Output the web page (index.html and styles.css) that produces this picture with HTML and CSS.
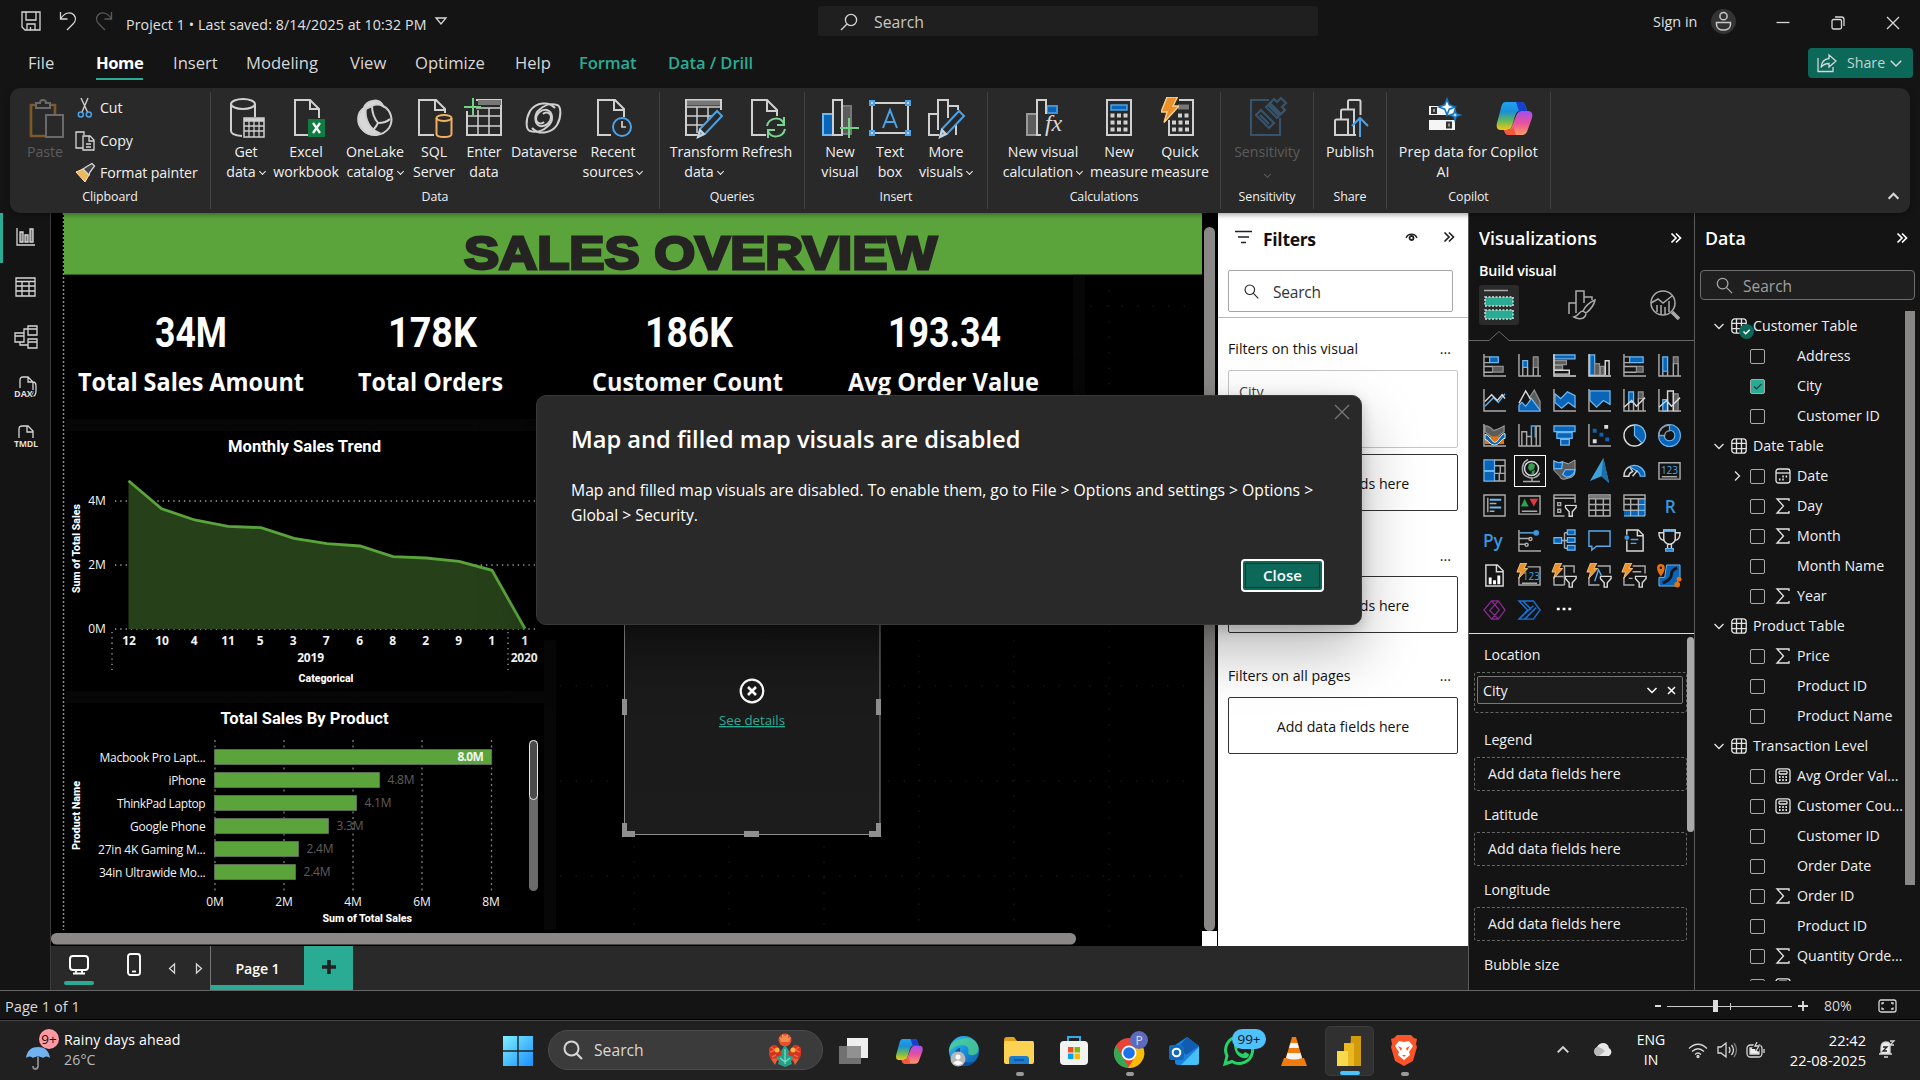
FILE: index.html
```html
<!DOCTYPE html>
<html lang="en">
<head>
<meta charset="utf-8">
<title>Project 1</title>
<link rel="stylesheet" href="styles.css">
</head>
<body>
<svg class="defs" width="0" height="0">
  <defs>
    <linearGradient id="cpA" x1="0" y1="0" x2="0" y2="1"><stop offset="0" stop-color="#1fa2f2"/><stop offset=".35" stop-color="#1b8fd6"/><stop offset=".65" stop-color="#5fb760"/><stop offset="1" stop-color="#f2c80f"/></linearGradient>
    <linearGradient id="cpB" x1="0" y1="0" x2="0" y2="1"><stop offset="0" stop-color="#a24ff0"/><stop offset=".5" stop-color="#e8519b"/><stop offset="1" stop-color="#ff9a62"/></linearGradient>
    <linearGradient id="edg" x1="0" y1="0" x2="1" y2="1"><stop offset="0" stop-color="#35c1f1"/><stop offset=".5" stop-color="#1b8fdc"/><stop offset="1" stop-color="#0c59a4"/></linearGradient>
    <linearGradient id="win" x1="0" y1="0" x2="1" y2="1"><stop offset="0" stop-color="#7df0ff"/><stop offset="1" stop-color="#1a8fff"/></linearGradient>
    <linearGradient id="mapBg" x1="0" y1="0" x2="0" y2="1"><stop offset="0" stop-color="#141414"/><stop offset=".4" stop-color="#1b1b1b"/><stop offset="1" stop-color="#1c1c1c"/></linearGradient>
    <symbol id="search" viewBox="0 0 20 20"><circle cx="8" cy="8" r="5.6"/><path d="M12.2 12.2 18 18"/></symbol>
    <symbol id="dbl" viewBox="0 0 12 12"><path d="M1.5 1.5 6 6l-4.5 4.5M6 1.5 10.5 6 6 10.5"/></symbol>
    <symbol id="down" viewBox="0 0 12 12"><path d="M1.5 4 6 8.5 10.5 4"/></symbol>
    <symbol id="tbl" viewBox="0 0 16 16"><rect x=".8" y=".8" width="14.4" height="14.4" rx="3"/><path d="M5.5 .8v14.4M10.5 .8v14.4M.8 5.3h14.4M.8 10.7h14.4"/></symbol>
    <symbol id="sum" viewBox="0 0 16 16"><path d="M14 3V1H2l6.5 7L2 15h12v-2"/></symbol>
    <symbol id="calc" viewBox="0 0 16 16"><rect x="1" y=".8" width="14" height="14.4" rx="2.5"/><rect x="4" y="3.2" width="8" height="2.8" rx=".8"/><path d="M4 9h1.6M7.2 9h1.6M10.4 9H12M4 12h1.6M7.2 12h1.6M10.4 12H12" stroke-width="1.8"/></symbol>
    <symbol id="cal" viewBox="0 0 16 16"><rect x="1" y="1" width="14" height="14" rx="2.5"/><path d="M1 5h14"/><path d="M7.3 8.5h1.5M10.6 8.5h1.5M4 11.5h1.5M7.3 11.5h1.5" stroke-width="1.8"/></symbol>
    <symbol id="copilot" viewBox="0 0 40 40"><path d="M12 4h15c3 0 4 2 5 5l1 4h-7c-3 0-4 2-5 5l-3 10c-1 3-3 4-6 4H7c-4 0-5-3-4-7l4-15c1-4 2-6 5-6z" fill="url(#cpA)"/><path d="M22 4h5c3 0 4 2 5 5l1 4h-8z" fill="#1a3fd0"/><path d="M28 13h6c4 0 5 3 4 7l-4 11c-1 4-3 6-6 6H15c-3 0-4-2-5-5h4c2 0 3-1 4-4l4-10c1-3 3-5 6-5z" fill="url(#cpB)"/><path d="M10 32h5c2 0 3-1 4-4l3 9h-7c-3 0-4-2-5-5z" fill="#f5583c"/></symbol>
    <symbol id="bolt" viewBox="0 0 12 18"><path d="M4 0h7L8 6h4L2 17l2-7H0z" fill="#e8912d" stroke="#ffd28a" stroke-width=".9"/></symbol>
    <symbol id="funnel" viewBox="0 0 12 12"><path d="M.8 .8h10.4v2L7.5 7v4.2h-3V7L.8 2.8z" fill="#141414" stroke="#d8d8d8" stroke-width="1.4"/></symbol>
  </defs>
</svg>

<header class="titlebar">
  <div class="quick">
    <svg width="20" height="20" viewBox="0 0 20 20" class="ln"><path d="M1 1h18v18H4l-3-3zM5 1v8h10V1M6 19v-6h8v6M9.500 16v3"/></svg>
    <svg width="18" height="20" viewBox="0 0 18 20" class="ln"><path d="M1.500 1v7h7M1.500 8C5 2 11 0 15 4c3 4 1 7-1 9l-6 6"/></svg>
    <svg width="18" height="20" viewBox="0 0 18 20" class="ln dim"><path d="M16.500 1v7h-7M16.500 8C13 2 7 0 3 4c-3 4-1 7 1 9l6 6"/></svg>
  </div>
  <div class="doc">Project 1 • Last saved: 8/14/2025 at 10:32 PM</div>
  <svg class="ln docarrow" width="12" height="8" viewBox="0 0 12 8"><path d="M1 1h10L6 7z"/></svg>
  <div class="topsearch"><svg class="ln flip" width="20" height="20"><use href="#search"/></svg><span>Search</span></div>
  <div class="account"><span>Sign in</span>
    <svg width="25" height="25" viewBox="0 0 25 25"><circle cx="12.500" cy="12.500" r="12.500" fill="#333"/><g fill="none" stroke="#c8c8c8" stroke-width="1.500"><circle cx="12.500" cy="7.200" r="3.600"/><path d="M5.500 13.500h14v2c0 3.500-3 5.500-7 5.500s-7-2-7-5.500z"/></g></svg>
  </div>
  <div class="winbtns">
    <svg class="ln" width="14" height="14" viewBox="0 0 14 14"><path d="M.5 6.500h13"/></svg>
    <svg class="ln" width="14" height="14" viewBox="0 0 14 14"><rect x="1" y="3.500" width="9.500" height="9.500" rx="1.500"/><path d="M4 1h6.500Q13 1 13 3.500V10"/></svg>
    <svg class="ln" width="14" height="14" viewBox="0 0 14 14"><path d="M1 1l12 12M13 1 1 13"/></svg>
  </div>
</header>

<nav class="menu">
  <div class="tabs">
    <span>File</span><span class="on"><b>Home</b></span><span>Insert</span><span>Modeling</span><span>View</span><span>Optimize</span><span>Help</span><span class="ctx">Format</span><span class="ctx">Data / Drill</span>
  </div>
  <button class="share"><svg class="ln" width="20" height="20" viewBox="0 0 20 20"><path d="M1 5v13.500h15V14M12 2l7 6-7 6v-3.500c-4 0-6 1-8 4C4.500 9 7 6 12 5.500z"/></svg><span>Share</span><svg class="ln" width="14" height="14"><use href="#down"/></svg></button>
</nav>

<section class="ribbon">
  <div class="grp g-clip">
    <div class="btns">
      <div class="rb off"><svg width="40" height="40" viewBox="0 0 40 40" fill="none" stroke-width="2"><path d="M10 7H6v31h15M26 7h4v9" stroke="#7d5a2a" stroke-width="2.600"/><path d="M11 5h4c0-4 6-4 6 0h4v5H11z" stroke="#6a6a6a"/><rect x="21" y="17" width="17" height="22" stroke="#6a6a6a"/></svg><span>Paste</span></div>
      <div class="clip">
        <div><svg width="20" height="20" viewBox="0 0 20 20" fill="none"><path d="M6 0l6.500 14M13 0 7 14" stroke="#d0d0d0" stroke-width="1.400"/><circle cx="5.800" cy="16.500" r="2.500" stroke="#4aa3e8" stroke-width="1.500"/><circle cx="13.800" cy="16.500" r="2.500" stroke="#4aa3e8" stroke-width="1.500"/></svg>Cut</div>
        <div><svg class="ln" width="20" height="20" viewBox="0 0 20 20"><path d="M8 17H1V1h8v3M8 5h7l4 4v10H8zM14 5v5h5M11 13h5M11 16h5"/></svg>Copy</div>
        <div><svg width="20" height="20" viewBox="0 0 20 20"><path d="M1 9 8 6l6 6-4 7z" fill="#f0b75a" stroke="#ffe3b0"/><path d="M8 6l3-2 6-3.500 2.500 2.500L15 9l-1 3z" fill="#444" stroke="#d8d8d8" stroke-width="1.300"/></svg>Format painter</div>
      </div>
    </div>
    <div class="cap">Clipboard</div>
  </div>
  <div class="grp g-data">
    <div class="btns">
      <div class="rb"><svg width="40" height="40" viewBox="0 0 40 40" class="ln2"><ellipse cx="17" cy="6" rx="12" ry="5"/><path d="M5 6v27c0 3 5 4.500 11 5M29 6v13"/><path d="M18 20h20v19H18z" fill="#292929" stroke-width="1.500"/><path d="M18 22h20" stroke-width="3.500"/><path d="M18 28h20M18 33h20M23 20v19M28 20v19M33 20v19" stroke-width="1.300"/></svg><span>Get<br>data<em></em></span></div>
      <div class="rb"><svg width="40" height="40" viewBox="0 0 40 40" class="ln2"><path d="M24 37H9V2h15l9 9v9M24 2v9h9"/><rect x="22" y="21" width="17" height="18" fill="#107c41" stroke="none"/><path d="M27 25l7 10M34 25l-7 10" stroke="#fff" stroke-width="2.200"/></svg><span>Excel<br>workbook</span></div>
      <div class="rb"><svg width="40" height="40" viewBox="0 0 40 40" class="ln2"><path d="M8 12C12 2 24-1 28 8c-4-2-8-2-11 0z" fill="#d8d8d8"/><path d="M9 10C2 14 1 26 8 32c8 8 20 6 26-2 5-8 2-18-6-22C24 1 12 1 9 10z"/><path d="M9 10c-7 5-7 16-1 22 5 5 11 5 16 3-9-4-15-13-13-26z" fill="#d8d8d8"/><path d="M17 8c0 7 2 12 6 17 5 0 9-1 12-4M23 25c-2 4-4 7-8 9"/></svg><span>OneLake<br>catalog<em></em></span></div>
      <div class="rb"><svg width="40" height="40" viewBox="0 0 40 40" class="ln2"><path d="M20 37H5V2h17l9 9v4M21 2v10h9"/><g stroke="#f0b060"><ellipse cx="30" cy="20" rx="7.500" ry="3"/><path d="M22.500 20v16c0 4 15 4 15 0V20"/></g></svg><span>SQL<br>Server</span></div>
      <div class="rb"><svg width="40" height="40" viewBox="0 0 40 40" class="ln2"><path d="M12 2h25v35H3V13" /><path d="M14 4.500h23" stroke="#777" stroke-width="5"/><path d="M12 10h25M3 18h34M3 28h34M14 12v25M25 10v27" stroke-width="1.500"/><path d="M9 0v18M0 9h17" stroke="#6fd382"/></svg><span>Enter<br>data</span></div>
      <div class="rb"><svg width="40" height="40" viewBox="0 0 40 40" class="ln2"><path d="M31 10C25 3 12 4 6 13 1 22 2 32 6 33c6 2 13 0 18-5 6-5 5-14-1-16-6-1-11 4-11 9 0 4 5 6 8 3"/><path d="M8 30c6 7 19 6 25-3 5-9 4-19 0-20-6-2-13 0-18 5-5 4-5 14 1 16 6 1 11-4 11-9 0-4-5-6-8-3"/></svg><span>Dataverse</span></div>
      <div class="rb"><svg width="40" height="40" viewBox="0 0 40 40" class="ln2"><path d="M18 37H5V2h17l9 9v8M21 2v10h9"/><circle cx="29" cy="29" r="9" stroke="#4aa3e8"/><path d="M29 23v6h4" stroke-width="1.700"/></svg><span>Recent<br>sources<em></em></span></div>
    </div>
    <div class="cap">Data</div>
  </div>
  <div class="grp g-query">
    <div class="btns">
      <div class="rb"><svg width="40" height="40" viewBox="0 0 40 40" class="ln2"><path d="M37 12V2H2v35h12"/><path d="M3 5h33" stroke="#777" stroke-width="5"/><path d="M2 9h35M2 18h28M2 27h18M13 9v26M24 9v15" stroke-width="1.500"/><path d="M14 39l2-8 17-18 5 5-17 18z" fill="#292929" stroke="#4aa3e8"/><path d="M14 39l2-7 4 4z" fill="#4aa3e8"/></svg><span>Transform<br>data<em></em></span></div>
      <div class="rb"><svg width="40" height="40" viewBox="0 0 40 40" class="ln2"><path d="M19 37H5V2h15l10 10v6M20 2v11h10"/><g stroke="#7bd694"><path d="M20 28c2-9 14-10 17-2M37 19v8h-7M38 31c-2 9-14 10-17 2M21 40v-8h7"/></g></svg><span>Refresh</span></div>
    </div>
    <div class="cap">Queries</div>
  </div>
  <div class="grp g-insert">
    <div class="btns">
      <div class="rb"><svg width="40" height="40" viewBox="0 0 40 40" class="ln2"><path d="M22 8h9v28h-9z" fill="#5c5c5c" stroke="#777"/><path d="M3 16h10v21H3z" fill="#0a64b8" stroke="#6cb8f0"/><path d="M13 2h9v35h-9z"/><path d="M29 20v20M20 30h19" stroke="#6fd382"/></svg><span>New<br>visual</span></div>
      <div class="rb"><svg width="42" height="40" viewBox="0 0 42 40" class="ln2"><rect x="3" y="5" width="36" height="30"/><path d="M1 3h4v4H1zM37 3h4v4h-4zM1 33h4v4H1zM37 33h4v4h-4zM14 30l7-18 7 18M16.500 24h9" stroke="#4aa3e8"/></svg><span>Text<br>box</span></div>
      <div class="rb"><svg width="40" height="40" viewBox="0 0 40 40" class="ln2"><path d="M13 37H3V16h9M12 32V2h10v18M22 8h10v4M30 37V25"/><path d="M14 39l2-8 17-18 5 5-17 18z" fill="#292929" stroke="#4aa3e8"/><path d="M14 39l2-7 4 4z" fill="#4aa3e8"/></svg><span>More<br>visuals<em></em></span></div>
    </div>
    <div class="cap">Insert</div>
  </div>
  <div class="grp g-calc">
    <div class="btns">
      <div class="rb"><svg width="40" height="40" viewBox="0 0 40 40" class="ln2"><path d="M4 16h10v21H4z" fill="#5c5c5c" stroke="#999"/><path d="M24 8h10v7H24z" fill="#0a64b8" stroke="#3d94db"/><path d="M18 37h-4V2h9v14"/><text x="22" y="33" class="fx">fx</text></svg><span>New visual<br>calculation<em></em></span></div>
      <div class="rb"><svg width="40" height="40" viewBox="0 0 40 40" class="ln2"><rect x="8" y="2" width="24" height="35"/><path d="M12 7h16v5H12z" fill="#0a64b8" stroke="#4aa3e8" stroke-width="1.500"/><path d="M11.500 17.500h17M11.500 24.500h17M11.500 31.500h17" stroke-width="4" stroke-dasharray="4 2.500"/></svg><span>New<br>measure</span></div>
      <div class="rb"><svg width="40" height="40" viewBox="0 0 40 40" class="ln2"><path d="M19 2h14v35H9V22"/><path d="M18 9h11" stroke="#777" stroke-width="5"/><path d="M18 17.500h12M12 24.500h17M12 31.500h17" stroke-width="4" stroke-dasharray="4 2.500"/><use href="#bolt" x="1" y="-1" width="18" height="27" stroke="none"/></svg><span>Quick<br>measure</span></div>
    </div>
    <div class="cap">Calculations</div>
  </div>
  <div class="grp g-sens">
    <div class="btns">
      <div class="rb off"><svg width="40" height="40" viewBox="0 0 40 40" fill="none" stroke="#37536b" stroke-width="2.200"><path d="M22 2H4v35h29V20"/><path d="M9 17l5-5 13 13-5 5zM13 17l9 9" /><path d="M19 9l8-8 3 3 4-4 5 5-4 4 3 3-8 8z"/><path d="M22 6l11 11" stroke-width="5"/></svg><span>Sensitivity<br><em class="solo"></em></span></div>
    </div>
    <div class="cap">Sensitivity</div>
  </div>
  <div class="grp g-share">
    <div class="btns">
      <div class="rb"><svg width="40" height="40" viewBox="0 0 40 40" class="ln2"><path d="M26 37H5V23q0-1.500 1.500-1.500H18V37M11 21v-8q0-1.500 1.500-1.500H24V37M18 11V3.500Q18 2 19.500 2H29q1.500 0 1.500 1.500V17"/><path d="M30 39V20M22 28l8-8 8 8" stroke="#4aa3e8"/></svg><span>Publish</span></div>
    </div>
    <div class="cap">Share</div>
  </div>
  <div class="grp g-cop">
    <div class="btns">
      <div class="rb"><svg width="40" height="40" viewBox="0 0 40 40"><path d="M6 8h26v9H6zM6 22h26v10H6z" fill="#f5f5f5"/><path d="M9 10h4v5H9zM24 24.500h4v5h-4z" stroke="#333" stroke-width="2" fill="#999"/><path d="M24 1l2.200 5.800L32 9l-5.800 2.200L24 17l-2.200-5.800L16 9l5.800-2.200zM32 12l1.200 3.800L37 17l-3.800 1.200L32 22l-1.200-3.800L27 17l3.800-1.200z" fill="#fff" stroke="#1478c8" stroke-width="1.600"/></svg><span>Prep data for<br>AI</span></div>
      <div class="rb"><svg width="42" height="40"><use href="#copilot"/></svg><span>Copilot</span></div>
    </div>
    <div class="cap">Copilot</div>
  </div>
  <svg class="ln collapse" width="13" height="13"><use href="#down"/></svg>
</section>

<main class="work">
  <aside class="rail">
    <div class="sel"><svg class="ln" width="20" height="20" viewBox="0 0 20 20"><path d="M1 1v17h18"/><path d="M4 5h3v10H4zM9 8h3v7H9zM14 2h3v13h-3z" fill="#777"/></svg></div>
    <div><svg class="ln" width="21" height="20" viewBox="0 0 21 20"><path d="M1 1h19v18H1zM1 4.500h19M1 9h19M1 14h19M7 4v15M14 4v15"/></svg></div>
    <div><svg class="ln" width="24" height="24" viewBox="0 0 24 24"><path d="M1 8h9v9H1zM1 11h9M14 1h9v9h-9zM14 4h9M14 14h9v9h-9zM14 17h9M10 10V4h4M6 17v3h8"/></svg></div>
    <div><svg class="ln" width="24" height="24" viewBox="0 0 24 24"><path d="M6 13V5q0-3 3-3h5l5 5v9q0 4-4 6M14 2v5h5M19 7q3 0 3 4v5q0 5-4 6"/><text x="0" y="22" class="tiny">DAX</text></svg></div>
    <div><svg class="ln" width="24" height="24" viewBox="0 0 24 24"><path d="M5 13V4q0-3 3-3h6l5 5v7M13 1v6h6"/><text x="0" y="22" class="tiny" textLength="24">TMDL</text></svg></div>
  </aside>

  <div class="center">
    <div class="stage">
      <svg class="report" width="1167" height="733" viewBox="51 213 1167 733">
        <rect x="51" y="213" width="1167" height="733" fill="#000"/>
        <g stroke="#151515" stroke-width="1.500" stroke-dasharray="1.500 14"><path d="M1109 290v640M1014 640v290M919 640v290M824 846v84M729 846v84M634 846v84M1075 306h120M560 686h60M560 781h60M560 876h630M888 686h305M888 781h305"/></g>
        <g fill="#070707"><rect x="66" y="419" width="470" height="12"/><rect x="66" y="691" width="478" height="12"/><rect x="1073" y="276" width="12" height="120"/><rect x="544" y="640" width="12" height="290"/></g>
        <path d="M63.500 213v717" stroke="#8a8a8a" stroke-width="1.500" stroke-dasharray="2 2"/>
        <rect x="64" y="213" width="1138" height="61.500" fill="#5ba43b"/>
        <rect x="64" y="274" width="1009" height="1" fill="#336120"/>
        <text x="464" y="269" class="banner" textLength="473" lengthAdjust="spacingAndGlyphs">SALES OVERVIEW</text>
        <g class="num">
          <text x="155" y="347" textLength="72" lengthAdjust="spacingAndGlyphs">34M</text>
          <text x="388" y="347" textLength="89" lengthAdjust="spacingAndGlyphs">178K</text>
          <text x="645" y="347" textLength="88" lengthAdjust="spacingAndGlyphs">186K</text>
          <text x="888" y="347" textLength="113" lengthAdjust="spacingAndGlyphs">193.34</text>
        </g>
        <g class="lab">
          <text x="78" y="391" textLength="226" lengthAdjust="spacingAndGlyphs">Total Sales Amount</text>
          <text x="358" y="391" textLength="145" lengthAdjust="spacingAndGlyphs">Total Orders</text>
          <text x="592" y="391" textLength="191" lengthAdjust="spacingAndGlyphs">Customer Count</text>
          <text x="848" y="391" textLength="191" lengthAdjust="spacingAndGlyphs">Avg Order Value</text>
        </g>

        <text x="228" y="452" class="ctitle" textLength="153" lengthAdjust="spacingAndGlyphs">Monthly Sales Trend</text>
        <path d="M115 501h421M115 565h421M115 629h421" stroke="#a8a8a8" stroke-dasharray="1.300 4" stroke-width="1.300"/>
        <path d="M128.500 480.700 161.600 508.700 194.700 520 228 526.300 261 527.700 294 538.300 327 543.700 360 546 393 556.700 426 558 459 561.300 492 570.300 525 628.700V629H128.500z" fill="#26411a"/>
        <path d="M128.500 480.700 161.600 508.700 194.700 520 228 526.300 261 527.700 294 538.300 327 543.700 360 546 393 556.700 426 558 459 561.300 492 570.300 525 628.700" fill="none" stroke="#5ba43b" stroke-width="2.800"/>
        <path d="M112 632v38M508 632v38" stroke="#a8a8a8" stroke-dasharray="1.300 4" stroke-width="1.300"/>
        <g class="ax" text-anchor="end"><text x="105.500" y="505">4M</text><text x="105.500" y="569">2M</text><text x="105.500" y="633">0M</text></g>
        <g class="ax semi" text-anchor="middle"><text x="129" y="645">12</text><text x="162" y="645">10</text><text x="194" y="645">4</text><text x="228" y="645">11</text><text x="260" y="645">5</text><text x="293" y="645">3</text><text x="326" y="645">7</text><text x="359.500" y="645">6</text><text x="392.500" y="645">8</text><text x="425.500" y="645">2</text><text x="458.500" y="645">9</text><text x="491.500" y="645">1</text><text x="524.500" y="645">1</text><text x="310.500" y="662">2019</text><text x="524" y="662">2020</text></g>
        <text x="298.500" y="682" class="atitle" textLength="55" lengthAdjust="spacingAndGlyphs">Categorical</text>
        <text transform="translate(79.500 593) rotate(-90)" class="atitle" textLength="89" lengthAdjust="spacingAndGlyphs">Sum of Total Sales</text>

        <text x="220.500" y="724" class="ctitle" textLength="168" lengthAdjust="spacingAndGlyphs">Total Sales By Product</text>
        <path d="M215 740v153M284 740v153M353 740v153M422 740v153M491.500 740v153" stroke="#7d7d7d" stroke-dasharray="2 3.500" stroke-width="1.300"/>
        <g fill="#5ba43b" stroke="#5c6b55"><path d="M214.500 749.500h277v15h-277zM214.500 772.500h165v15h-165zM214.500 795.500h142v15h-142zM214.500 818.500h114v15h-114zM214.500 841.500h84v15h-84zM214.500 864.500h81v15h-81z"/></g>
        <g class="ax"><text x="99.500" y="762" textLength="106">Macbook Pro Lapt...</text><text x="168.500" y="785" textLength="37">iPhone</text><text x="117" y="808" textLength="88.500">ThinkPad Laptop</text><text x="130" y="831" textLength="75.500">Google Phone</text><text x="98" y="854" textLength="107.500">27in 4K Gaming M...</text><text x="99" y="877" textLength="106.500">34in Ultrawide Mo...</text></g>
        <text x="457.500" y="761" class="ax semi" textLength="26">8.0M</text>
        <g class="ax grey"><text x="387.500" y="784">4.8M</text><text x="364.500" y="807">4.1M</text><text x="336.500" y="830">3.3M</text><text x="306.500" y="853">2.4M</text><text x="303.500" y="876">2.4M</text></g>
        <g class="ax" text-anchor="middle"><text x="215" y="906">0M</text><text x="284" y="906">2M</text><text x="353" y="906">4M</text><text x="422" y="906">6M</text><text x="491" y="906">8M</text></g>
        <text x="322.500" y="922" class="atitle" textLength="89.500" lengthAdjust="spacingAndGlyphs">Sum of Total Sales</text>
        <text transform="translate(79.500 850) rotate(-90)" class="atitle" textLength="69" lengthAdjust="spacingAndGlyphs">Product Name</text>
        <rect x="529" y="740" width="9" height="151" rx="4.500" fill="#6b6b6b"/><rect x="529.500" y="740.500" width="8" height="59" rx="4" fill="#4a4a4a" stroke="#e8e8e8"/>

        <rect x="624.500" y="600" width="255.500" height="234.500" fill="url(#mapBg)" stroke="#8a8a8a"/>
        <path d="M622 699h5v16h-5zM876 699h5v16h-5zM744 831h15v6h-15zM622 823h5v8h8v6h-13zM876 823h5v14h-12v-6h7z" fill="#8f8f8f"/>
        <circle cx="752" cy="691" r="11.300" fill="none" stroke="#fff" stroke-width="2.200"/><path d="M748 687l8 8M756 687l-8 8" stroke="#fff" stroke-width="2.600"/>
        <text x="719" y="725" class="see" textLength="66">See details</text>

        <rect x="51" y="933" width="1025" height="11.500" rx="5.500" fill="#8a8886"/>
        <rect x="1204" y="227" width="11" height="704" rx="5.500" fill="#8a8886"/>
        <rect x="1202" y="931" width="15" height="15" fill="#fff"/>
      </svg>
      <section class="filters">
        <div class="fhead"><svg class="ln" width="17" height="14" viewBox="0 0 17 14"><path d="M0 1.500h17M3 7h11M6 12.500h5" stroke-width="1.700"/></svg><b>Filters</b><svg class="ln eye" width="13" height="10" viewBox="0 0 13 10"><path d="M1 6C3 1 10 1 12 6"/><circle cx="6.500" cy="6" r="2" stroke-width="1.800"/></svg><svg class="ln dc" width="12" height="12"><use href="#dbl"/></svg></div>
        <div class="fsearch"><svg class="ln" width="17" height="17"><use href="#search"/></svg><span>Search</span></div>
        <div class="fbody">
          <div class="ftitle f1"><span>Filters on this visual</span><span>...</span></div>
          <div class="fcard">City</div>
          <div class="fdrop">Add data fields here</div>
          <div class="ftitle f2"><span>Filters on this page</span><span>...</span></div>
          <div class="fdrop">Add data fields here</div>
          <div class="ftitle f3"><span>Filters on all pages</span><span>...</span></div>
          <div class="fdrop">Add data fields here</div>
        </div>
      </section>
    </div>
    <div class="pagebar">
      <div class="view on"><svg class="ln" width="20" height="20" viewBox="0 0 20 20"><rect x="1" y="1" width="18" height="14" rx="3" stroke-width="2"/><path d="M7 15v3M13 15v3M4 18.500h12" stroke-width="1.800"/></svg></div>
      <div class="view ph"><svg class="ln" width="14" height="23" viewBox="0 0 14 23"><rect x="1" y="1" width="12" height="21" rx="2.500" stroke-width="1.900"/><path d="M5 18.500h4" stroke-width="1.800"/></svg></div>
      <svg class="ln nv" width="8" height="11" viewBox="0 0 8 11"><path d="M6.500 1v9L1.500 5.500z"/></svg>
      <svg class="ln nv n2" width="8" height="11" viewBox="0 0 8 11"><path d="M1.500 1v9l5-4.500z"/></svg>
      <div class="page">Page 1</div>
      <div class="add"><svg width="14" height="14" viewBox="0 0 14 14"><path d="M7 0v14M0 7h14" stroke="#222" stroke-width="3.600"/></svg></div>
    </div>
  </div>

  <section class="viz">
    <div class="phead"><b>Visualizations</b><svg class="ln w" width="12" height="12"><use href="#dbl"/></svg></div>
    <div class="build">Build visual</div>
    <div class="vtabs">
      <div class="vt on"><svg width="30" height="32" viewBox="0 0 30 32"><path d="M0 1.500h24" stroke="#aaa" stroke-width="1.500"/><path d="M1 8h28v9H1zM1 21h28v9H1z" fill="#2aac94" stroke="#ddd" stroke-width="1.500" stroke-dasharray="2 1.500"/></svg></div>
      <div class="vt"><svg class="ln a" width="28" height="30" viewBox="0 0 28 30"><path d="M1 24V13h7v10M8 13V1h8v12M16 7h8v3M27 10c-5 2-10 7-12 11l3 2c4-3 8-8 9-13zM15 21c-4 0-4 5-9 6 5 3 11 2 12-3"/></svg></div>
      <div class="vt"><svg class="ln a" width="31" height="31" viewBox="0 0 31 31"><circle cx="13" cy="13" r="12"/><path d="M1 13l7-4 5 4 9-7M7 22v-7M11 24v-9M15 24v-7M19 22V11"/><path d="M22 22l7 7" stroke-width="3.500"/></svg></div>
    </div>
    <svg class="notch" width="225" height="12" viewBox="0 0 225 12"><path d="M0 10.500h20l10-9 10 9h185" fill="none" stroke="#666"/></svg>
    <div class="vgrid">
      <svg viewBox="0 0 24 24"><path class="b" d="M7 3h9v6H7z"/><path class="d" d="M10 13h11v6H10z"/><path class="g" d="M1 0v23h23M1 3h6M1 9h6M1 13h9M1 19h9"/></svg>
      <svg viewBox="0 0 24 24"><path class="b" d="M5 7h5v7H5z"/><path class="d" d="M16 3h5v11h-5z"/><path class="g" d="M1 0v23h23M5 14v9M10 14v9M16 14v9M21 14v9"/></svg>
      <svg viewBox="0 0 24 24"><path class="b" d="M1 1h22v4H1z"/><path class="d" d="M1 7h13v4H1zM1 12h9v4H1z"/><path class="w" d="M1 0v23h23M1 17h16v4H1"/></svg>
      <svg viewBox="0 0 24 24"><path class="b" d="M2 1h5v21H2z"/><path class="d" d="M7 10h5v12H7zM13 13h4v9h-4z"/><path class="w" d="M1 0v23h23M18 22V7h4v15"/></svg>
      <svg viewBox="0 0 24 24"><path class="b" d="M7 3h14v6H7z"/><path class="d" d="M14 13h7v6h-7z"/><path class="g" d="M1 0v23h23M1 3h6M1 9h6M1 13h13M1 19h13"/></svg>
      <svg viewBox="0 0 24 24"><path class="b" d="M5 3h5v15H5z"/><path class="d" d="M16 3h5v7h-5z"/><path class="g" d="M1 0v23h23M5 18v5M10 18v5M16 10v13M21 10v13"/></svg>

      <svg viewBox="0 0 24 24"><path class="g" d="M1 0v23h23"/><path class="bl" d="M2 18l9-9 5 5 7-9"/><path class="w" d="M2 13l7-7 6 6 5-6 3 4"/></svg>
      <svg viewBox="0 0 24 24"><path class="d" d="M12 9l5-8 6 12v9z"/><path class="w" d="M1 15 8 2l7 12"/><path class="b" d="M1 23v-6l3-3 4 4 6-8 9 12v1z"/></svg>
      <svg viewBox="0 0 24 24"><path class="b" d="M2 5l6 5 7-7 8 4v12l-7-5-7 6-7-6z"/><path class="g" d="M1 0v23h23"/></svg>
      <svg viewBox="0 0 24 24"><path class="b" d="M2 2h21v14l-7-4-7 7-7-7z"/><path class="g" d="M1 0v23h23"/></svg>
      <svg viewBox="0 0 24 24"><path class="b" d="M6 3h5v11H6z"/><path class="d" d="M16 3h5v7h-5z"/><path class="g" d="M1 0v23h23M6 14v9M11 14v9M16 10v13M21 10v13"/><path class="w" d="M1 19l8-7 5 6 9-9"/></svg>
      <svg viewBox="0 0 24 24"><path class="b" d="M5 11h5v12H5z"/><path class="d" d="M16 5h5v18h-5z"/><path class="g" d="M1 0v23h23"/><path class="w" d="M10 23V2h6v21M1 19l8-7 5 6 9-9"/></svg>

      <svg viewBox="0 0 24 24"><path class="d" d="M2 2q5 0 9 5 6-2 11-5v6l-10 8L2 8z"/><path d="M2 13h20v8H2z" fill="#e8730c"/><path d="M2 11c5 0 6 7 10 8s6-9 11-9v5c-4 0-6 7-11 7S5 16 2 16z" fill="#0a64b8" stroke="#dff" stroke-width="1"/><path class="g" d="M1 0v23h23"/></svg>
      <svg viewBox="0 0 24 24"><path class="g" d="M1 0v23h23M4 23V8h5v15M9 13h5v10M19 2h4v21M19 2v21"/><path class="bl" d="M14 14V2h4v12"/></svg>
      <svg viewBox="0 0 24 24"><path class="b" d="M1 2h22v6H1zM4 9h16v6H4zM8 16h9v6H8z"/></svg>
      <svg viewBox="0 0 24 24"><path class="g" d="M1 0v23h23"/><path d="M5 5h4v4H5zM12 9h4v4h-4zM18 14h4v4h-4z" fill="#0a64b8"/><path d="M17 1h4v4h-4zM5 16h4v4H5z" fill="#ddd"/></svg>
      <svg viewBox="0 0 24 24"><circle class="w" cx="12" cy="12" r="11"/><path class="b" d="M12 1a11 11 0 0 1 8 19l-8-8z"/></svg>
      <svg viewBox="0 0 24 24"><circle cx="12" cy="12" r="8.500" fill="none" stroke="#6cb8f0" stroke-width="7"/><circle cx="12" cy="12" r="8.500" fill="none" stroke="#0a64b8" stroke-width="4.800"/><path d="M1 12A11 11 0 0 1 12 1v6a5 5 0 0 0-5 5z" fill="#141414" stroke="#999" stroke-width="1.400"/></svg>

      <svg viewBox="0 0 24 24"><path class="b" d="M1 1h11v11H1zM1 13h11v10H1z"/><path class="g" d="M12 1h11v22H12M12 7h11M18 7v8M12 15h11M17 15v8"/></svg>
      <svg class="pick" viewBox="0 0 30 30"><circle cx="16.500" cy="12.500" r="7" class="w"/><path d="M14 8l3-1 3 2-1 4-4 2-2-3zM17 15l3-1-1 4-3 1z" fill="#31a050"/><path class="g" d="M13 3.500c-7 3-8 15 0 17.500 4 2 9 1 12-4M17 22v3M8 25.500h17"/></svg>
      <svg viewBox="0 0 24 24"><path d="M1 2q5 3 9 1l6 2 7-4v12q0 6-7 7-8 3-9-2L1 12z" fill="#5c5c5c" stroke="#aaa"/><path class="b" d="M1 2q5 3 9 1l-1 7H1zM13 11h10q-1 7-9 8l-4-3z"/></svg>
      <svg viewBox="0 0 24 24"><path d="M16-1 2 23l12-5 8 7z" fill="#3ea2d8"/><path d="M16-1l6 26-8-7z" fill="#1d6fa8"/></svg>
      <svg viewBox="0 0 24 24"><path class="w" d="M1 18a11 11 0 0 1 6-10l3 5a6 6 0 0 0-4 5z"/><path class="b" d="M7 8a11 11 0 0 1 16 10h-5a6 6 0 0 0-3-5z"/><path class="w" d="M10 18l5-6" stroke-width="2"/></svg>
      <svg viewBox="0 0 24 24"><path class="g" d="M1 4h22v17H1zM4 18.500h16"/><text x="12" y="15.500" class="t123">123</text></svg>

      <svg viewBox="0 0 24 24"><path class="g" d="M1 1h22v22H1zM5 4v15M7 10h7M7 18h5"/><path d="M7 6h12M7 14h12" stroke="#6cb8f0" stroke-width="2"/></svg>
      <svg viewBox="0 0 24 24"><path class="g" d="M1 2h22v19H1zM4 18h16"/><path d="M3 13l4-8 4 8z" fill="#31a050"/><path d="M12 5h9l-4.500 8z" fill="#e0393e"/></svg>
      <svg viewBox="0 0 24 24"><path class="g" d="M12 23H1V1h22v8M1 4.500h22M5 9h3v3H5zM5 16h3v3H5z"/><use href="#funnel" x="12" y="11" width="13" height="13"/></svg>
      <svg viewBox="0 0 24 24"><path class="g" d="M1 1h22v22H1zM1 5h22M1 11h22M1 17h22M8 5v18M16 5v18"/><path d="M2 3h20" stroke="#777" stroke-width="3"/></svg>
      <svg viewBox="0 0 24 24"><path d="M16 5h7v18H1v-6h15z" fill="#0a64b8"/><path class="g" d="M1 1h22v4H1zM1 5v12h15V5M1 11h15M8 5v12"/><path d="M16 11h7M16 17h7M8 17v6M16 17v6M1 23h22V5" stroke="#9ad0f8" fill="none"/></svg>
      <svg viewBox="0 0 24 24"><text x="7" y="19.500" class="big">R</text></svg>

      <svg viewBox="0 0 24 24"><text x="0" y="19" class="big">Py</text></svg>
      <svg viewBox="0 0 24 24"><path class="g" d="M1 1v22h23M1 10h11M1 16h7"/><circle class="g" cx="13" cy="10.500" r="1.600"/><circle class="g" cx="9" cy="16.500" r="1.600"/><path class="bl" d="M1 4h16"/><circle cx="19" cy="4" r="3" fill="#3a96dd"/></svg>
      <svg viewBox="0 0 24 24"><path class="g" d="M9 12h4M12 4v16M12 4h3M12 12h3M12 20h3"/><path class="b" d="M1 9h8v6H1zM15 1h8v5h-8zM15 9h8v5h-8zM15 17h8v5h-8z"/></svg>
      <svg viewBox="0 0 24 24"><path class="bl" d="M1 2h22v16H9l-5 4v-4H1z"/></svg>
      <svg viewBox="0 0 24 24"><path class="w" d="M4 6V1h12l5 5v17H4V12M15 1v6h6"/><path class="bl" d="M8 11h8M8 15h6"/><circle cx="4" cy="9" r="2.500" fill="#3a96dd"/></svg>
      <svg viewBox="0 0 24 24"><path class="w" d="M6 1h12v9q0 5-6 6-6-1-6-6zM6 4H1q0 8 6 8M18 4h5q0 8-6 8M10 16v5M14 16v5"/><path d="M6 2h12" stroke="#6cb8f0" stroke-width="2"/><path class="b" d="M8 20.500h8v2.500H8z"/></svg>

      <svg viewBox="0 0 24 24"><path class="w" stroke-width="2" d="M3 1h12l6 6v16H3zM14 1v7h7"/><path d="M6 14h3v7H6zM10.500 17h3v4h-3zM15 12h3v9h-3z" fill="#fff"/></svg>
      <svg viewBox="0 0 24 24"><path class="g" d="M10 3h13v19H1v-8M4 20h16"/><text x="5" y="17" class="t123 l">123</text><use href="#bolt" x="-2" y="-1" width="13" height="17"/></svg>
      <svg viewBox="0 0 24 24"><path class="g" d="M10 2h12v7M12 2v20M1 13h10M1 13v9h11"/><use href="#bolt" x="-2" y="-1" width="13" height="17"/><use href="#funnel" x="12" y="12" width="13" height="13"/></svg>
      <svg viewBox="0 0 24 24"><path class="g" d="M10 2h13v8M1 14v8h11"/><path class="bl" d="M7 18l4-12 3 6"/><use href="#bolt" x="-2" y="-1" width="13" height="17"/><use href="#funnel" x="12" y="12" width="13" height="13"/></svg>
      <svg viewBox="0 0 24 24"><path class="g" d="M10 2h13v8M1 14v8h11M10 8h9M6 15h4"/><use href="#bolt" x="-2" y="-1" width="13" height="17"/><use href="#funnel" x="12" y="12" width="13" height="13"/></svg>
      <svg viewBox="0 0 24 24"><path d="M9 1h14v12l-5 10H1V14h6z" fill="#0a64b8" stroke="#6cb8f0"/><path d="M20 4q-6 2-6 7t-9 9" fill="none" stroke="#141414" stroke-width="3"/><path d="M-1 4q0-4 4-4t4 4q0 4-4 9-4-5-4-9z" fill="#e8730c"/><circle cx="3" cy="4" r="1.300" fill="#141414"/><circle cx="22" cy="16" r="2.600" fill="#e8730c"/><circle cx="20" cy="21.500" r="3" fill="#e8730c"/></svg>

      <svg viewBox="0 0 24 24"><path d="M9 2h7l7 9.500-7 9.500H9L1 11.500zM16 2 7 12l9 9M9 2l8 9.500-8 9.500" fill="none" stroke="#8c2a94" stroke-width="1.300"/></svg>
      <svg viewBox="0 0 24 24"><path d="M1 2h15l7 9.500-7 9.500H1l9-9.500zM1 21 16 7M7 21 19 9M5 2l9 9" fill="none" stroke="#1a72d4" stroke-width="1.500"/></svg>
      <svg viewBox="0 0 24 24"><path d="M4 10.500h3M10 10.500h3M16 10.500h3" stroke="#fff" stroke-width="2.600"/></svg>
    </div>
    <div class="wells">
      <h4 class="h1st">Location</h4>
      <div class="well full"><div class="pill"><span>City</span><svg class="ln w" width="12" height="12"><use href="#down"/></svg><svg class="ln w" width="9" height="9" viewBox="0 0 9 9"><path d="M1 1l7 7M8 1 1 8"/></svg></div></div>
      <h4>Legend</h4><div class="well">Add data fields here</div>
      <h4>Latitude</h4><div class="well">Add data fields here</div>
      <h4>Longitude</h4><div class="well">Add data fields here</div>
      <h4>Bubble size</h4>
      <i class="vbar"></i>
    </div>
  </section>

  <section class="data">
    <div class="phead"><b>Data</b><svg class="ln w" width="12" height="12"><use href="#dbl"/></svg></div>
    <div class="dsearch"><svg class="ln" width="19" height="19"><use href="#search"/></svg><span>Search</span></div>
    <div class="list">
      <div class="t"><svg class="ic c"><use href="#down"/></svg><span class="ticon"><svg class="ic"><use href="#tbl"/></svg><svg class="ok" width="15" height="15" viewBox="0 0 15 15"><circle cx="7.500" cy="7.500" r="7.500" fill="#0c695a"/><path d="M4.500 7.500l2.200 2.200 4-4" fill="none" stroke="#fff" stroke-width="1.500"/></svg></span>Customer Table</div>
      <div class="f"><i></i><u></u><i></i>Address</div>
      <div class="f"><i></i><u class="ck"><svg width="13" height="13" viewBox="0 0 13 13"><path d="M3 6.500l2.500 2.500 5-5" fill="none" stroke="#14433b" stroke-width="1.200"/></svg></u><i></i>City</div>
      <div class="f"><i></i><u></u><i></i>Customer ID</div>
      <div class="t"><svg class="ic c"><use href="#down"/></svg><svg class="ic"><use href="#tbl"/></svg>Date Table</div>
      <div class="f"><svg class="ic c r"><use href="#down"/></svg><u></u><svg class="ic"><use href="#cal"/></svg>Date</div>
      <div class="f"><i></i><u></u><svg class="ic"><use href="#sum"/></svg>Day</div>
      <div class="f"><i></i><u></u><svg class="ic"><use href="#sum"/></svg>Month</div>
      <div class="f"><i></i><u></u><i></i>Month Name</div>
      <div class="f"><i></i><u></u><svg class="ic"><use href="#sum"/></svg>Year</div>
      <div class="t"><svg class="ic c"><use href="#down"/></svg><svg class="ic"><use href="#tbl"/></svg>Product Table</div>
      <div class="f"><i></i><u></u><svg class="ic"><use href="#sum"/></svg>Price</div>
      <div class="f"><i></i><u></u><i></i>Product ID</div>
      <div class="f"><i></i><u></u><i></i>Product Name</div>
      <div class="t"><svg class="ic c"><use href="#down"/></svg><svg class="ic"><use href="#tbl"/></svg>Transaction Level</div>
      <div class="f"><i></i><u></u><svg class="ic"><use href="#calc"/></svg>Avg Order Val...</div>
      <div class="f"><i></i><u></u><svg class="ic"><use href="#calc"/></svg>Customer Cou...</div>
      <div class="f"><i></i><u></u><i></i>Customer ID</div>
      <div class="f"><i></i><u></u><i></i>Order Date</div>
      <div class="f"><i></i><u></u><svg class="ic"><use href="#sum"/></svg>Order ID</div>
      <div class="f"><i></i><u></u><i></i>Product ID</div>
      <div class="f"><i></i><u></u><svg class="ic"><use href="#sum"/></svg>Quantity Orde...</div>
      <div class="f"><i></i><u></u><svg class="ic"><use href="#calc"/></svg></div>
      <b class="dbar"></b>
    </div>
  </section>
</main>

<footer class="status">
  <span class="pg">Page 1 of 1</span>
  <svg width="150" height="20" viewBox="0 0 150 20"><path d="M0 10h6M143 10h10M148 5v10" stroke="#ddd" stroke-width="1.800"/><path d="M12 10.500h125" stroke="#ccc"/><path d="M58 4h5v12h-5z" fill="#ddd"/><path d="M75.500 7v7" stroke="#ccc"/></svg>
  <span class="pct">80%</span>
  <svg class="ln" width="19" height="14" viewBox="0 0 19 14"><rect x="1" y="1" width="17" height="12" rx="2"/><path d="M4 5.500V4h2M13 4h2v1.500M4 8.500V10h2M13 10h2V8.500"/></svg>
</footer>

<footer class="task">
  <div class="weather">
    <svg width="36" height="42" viewBox="0 0 36 42"><path d="M1 28c1-8 6-11 12-11s11 3 12 11c-3-2-5-2-7 0-3-2-7-2-10 0-2-2-4-2-7 0z" fill="#6fb4f0"/><path d="M13 27v9q0 3-3 3-2 0-2-3" fill="none" stroke="#8c8c8c" stroke-width="1.800"/><circle cx="24" cy="9" r="10" fill="#ff99a4"/><text x="24" y="13.500" class="badge">9+</text></svg>
    <div><span>Rainy days ahead</span><span class="sub">26°C</span></div>
  </div>
  <div class="cell"><svg width="30" height="30" viewBox="0 0 30 30"><path d="M0 0h14.300v14.300H0zM15.700 0H30v14.300H15.700zM0 15.700h14.300V30H0zM15.700 15.700H30V30H15.700z" fill="url(#win)"/></svg></div>
  <div class="tsearch"><svg class="ln" width="20" height="20" viewBox="0 0 20 20"><circle cx="8.500" cy="8.500" r="7" stroke-width="2"/><path d="M13.500 13.500 19 19" stroke-width="2.200"/></svg><span>Search</span>
    <svg width="36" height="34" viewBox="0 0 36 34"><circle cx="18" cy="7" r="6.500" fill="#e5502d"/><path d="M12 4l3 1 0-4 3 2 3-2 0 4 3-1-2 5h-8z" fill="#f58a4b"/><path d="M2 15q5-6 9-1l5 7-4 7q-9 0-10-6zM34 15q-5-6-9-1l-5 7 4 7q9 0 10-6z" fill="#d5321f"/><path d="M4 14l4 3-5 2M32 14l-4 3 5 2M5 24l4-2M31 24l-4-2" fill="none" stroke="#f0643c" stroke-width="1.500"/><circle cx="10" cy="17" r="2.500" fill="#f5b53c"/><circle cx="26" cy="17" r="2.500" fill="#f5b53c"/><path d="M18 12l4 6-1 4 6 2-3 4 1 3-7 3-7-3 1-3-3-4 6-2-1-4z" fill="#27a08a"/><path d="M18 16v15M13 25l5 4 5-4" fill="none" stroke="#7fe0c8" stroke-width="1.200"/><path d="M4 26l7-1-3 7zM32 26l-7-1 3 7z" fill="#e5603a"/></svg>
  </div>
  <div class="cell first"><svg width="30" height="28" viewBox="0 0 30 28"><path d="M8 1h21v20H8z" fill="#eee"/><path d="M0 9h22v18H0z" fill="#808080" opacity=".85"/></svg></div>
  <div class="cell"><svg width="30" height="30"><use href="#copilot"/></svg></div>
  <div class="cell"><svg width="32" height="32" viewBox="0 0 32 32"><circle cx="16" cy="16" r="15" fill="url(#edg)"/><path d="M14 4c11-4 19 6 16 13-2 4-9 4-10 1 2-4-1-8-5-8C8 10 3 14 1 18 0 10 6 5 14 4z" fill="#4fd388" opacity=".75"/><path d="M12 17c-2 8 6 13 15 9-5 8-19 6-21-4 0-5 3-9 6-9z" fill="#0c4f96"/><circle cx="10" cy="24" r="7.500" fill="#b8b8b8"/><circle cx="10" cy="22" r="2.500" fill="#fff"/><path d="M5 28q5-5 10 0-5 4-10 0z" fill="#fff"/></svg></div>
  <div class="cell"><svg width="30" height="28" viewBox="0 0 30 28"><path d="M0 3q0-3 3-3h7l3 4h16v8H0z" fill="#e0a21b"/><rect y="4" width="30" height="23" rx="2" fill="#fcd253"/><path d="M5 27v-5q0-3 3-3h14q3 0 3 3v5z" fill="#1c7cd0"/><path d="M10 23h10" stroke="#0d4f8c" stroke-width="1.500"/></svg><i></i></div>
  <div class="cell"><svg width="28" height="31" viewBox="0 0 28 31"><path d="M8 7V2h12v5" fill="none" stroke="#35a8e8" stroke-width="2"/><rect y="6" width="28" height="24" rx="4" fill="#f2f2f2"/><path d="M8 12h5.500v5.500H8z" fill="#f25022"/><path d="M14.500 12H20v5.500h-5.500z" fill="#7fba00"/><path d="M8 18.500h5.500V24H8z" fill="#00a4ef"/><path d="M14.500 18.500H20V24h-5.500z" fill="#ffb900"/></svg></div>
  <div class="cell"><svg width="38" height="36" viewBox="0 0 38 36"><circle cx="19" cy="20" r="15" fill="#ea4335"/><path d="M6 12.500 19 35A15 15 0 0 1 6 12.500z" fill="#34a853"/><path d="M19 13h13.500A15 15 0 0 1 18 35l7-11z" fill="#fbbc04"/><circle cx="19" cy="20" r="7.500" fill="#fff"/><circle cx="19" cy="20" r="5.800" fill="#1a73e8"/><circle cx="29" cy="7" r="9" fill="#5c6bc0"/><text x="29" y="11.500" class="badge lt">P</text></svg><i></i></div>
  <div class="cell"><svg width="30" height="30" viewBox="0 0 30 30"><path d="M6 9 18 1l12 9v16q0 3-3 3H9q-3 0-3-3z" fill="#1a82dc"/><path d="M18 1l12 9-13 9-7-8z" fill="#0f5cb0"/><path d="M30 11v15q0 3-3 3H12z" fill="#47c0f5"/><rect y="9" width="15" height="15" rx="2" fill="#0f6cbd"/><circle cx="7.500" cy="16.500" r="3.800" fill="none" stroke="#fff" stroke-width="2"/></svg></div>
  <div class="cell"><svg class="wide" width="46" height="38" viewBox="0 0 46 38"><path d="M5 35l2-8A13.500 13.500 0 1 1 12 32.500z" fill="#202020" stroke="#25d366" stroke-width="3"/><path d="M14 15c1-2 3-2 4 0l1 3-2 2c1 3 3 4 6 5l2-2 4 2c0 4-3 5-6 4-5-1-9-6-9-14z" fill="#25d366"/><rect x="12" y="0" width="34" height="20" rx="10" fill="#4cc2ff"/><text x="29" y="15" class="badge">99+</text></svg></div>
  <div class="cell"><svg width="26" height="30" viewBox="0 0 26 30"><path d="M3 22h20l3 8H0z" fill="#f07c10"/><path d="M11 1h4l7 24q-9 3-18 0z" fill="#f07c10"/><path d="M9.500 7h7l1.500 5h-10zM6.500 17h13l1.500 5q-8 3-16 0z" fill="#f4f4f4"/></svg></div>
  <div class="cell cur"><svg width="24" height="30" viewBox="0 0 24 30"><path d="M14 0h10v30H12z" fill="#d09a0a"/><path d="M7 7h10v23H7z" fill="#eab922"/><path d="M0 15h11v15H0z" fill="#f7d94c"/></svg><i></i></div>
  <div class="cell"><svg width="28" height="31" viewBox="0 0 28 31"><path d="M7 0h14l3 3 3 1-1 5 1 3-4 14-9 5-9-5L1 12l1-3-1-5 3-1z" fill="#fb542b"/><path d="M9 6l5 1 5-1 4 5-4 6 1 3-6 5-6-5 1-3-4-6z" fill="#fff"/><path d="M8 11l4 2-1 3zM20 11l-4 2 1 3zM12 20h4l-2 2z" fill="#fb542b"/></svg><i></i></div>
  <div class="tray">
    <svg class="ln up" width="14" height="14"><use href="#down"/></svg>
    <svg class="cloud" width="22" height="15" viewBox="0 0 22 15"><path d="M5 14a5 5 0 0 1 0-9C8-1 16 0 17 6a4.500 4.500 0 0 1 0 8z" fill="#e8e8e8"/><path d="M5 14a5 5 0 0 1 0-9c3 0 6 2 8 4l-6 5z" fill="#b8b8b8"/></svg>
    <div class="lang">ENG<br>IN</div>
    <svg class="ln tr wifi" width="20" height="16" viewBox="0 0 20 16"><path d="M1 6.500Q10-2 19 6.500M4 9.500Q10 4 16 9.500M7 12.500q3-3 6 0"/><circle cx="10" cy="14.500" r="1"/></svg>
    <svg class="ln tr" width="20" height="18" viewBox="0 0 20 18"><path d="M1 6h3l5-4v14l-5-4H1zM12 6q2 3 0 6M14.500 4q4 5 0 10"/><path d="M17 2q5 7 0 14" stroke="#777"/></svg>
    <svg class="ln tr" width="20" height="18" viewBox="0 0 20 18"><rect x="1" y="4" width="15" height="12" rx="3.500"/><path d="M18 8v4"/><path d="M4 7h9v6H4z" fill="#eee"/><path d="M12 0 9 6h3l-1 4" stroke="#202020" stroke-width="4"/><path d="M11 1 9 5h4l-3 5"/></svg>
    <div class="clock">22:42<br>22-08-2025</div>
    <svg class="ln" width="18" height="19" viewBox="0 0 18 19"><path d="M4 14V8q0-6 5-6 3 0 4 2v10zM2 14h13M7 17h4" fill="#eee"/><path d="M6 7h4l-4 4h4" stroke="#222"/><path d="M13 1h4l-4 4h4"/></svg>
  </div>
</footer>

<div class="dialog">
  <svg class="ln dx" width="16" height="16" viewBox="0 0 16 16"><path d="M1 1l14 14M15 1 1 15"/></svg>
  <h2>Map and filled map visuals are disabled</h2>
  <p>Map and filled map visuals are disabled. To enable them, go to File &gt; Options and settings &gt; Options &gt;<br>Global &gt; Security.</p>
  <button class="close">Close</button>
</div>
</body>
</html>
```
FILE: styles.css
```css
* { box-sizing: border-box; }
body { margin: 0; width: 1920px; height: 1080px; overflow: hidden; display: flex; flex-direction: column; background: #141414; color: #f0f0f0; font: 14.2px/20px "Open Sans", "Noto Sans", sans-serif; position: relative; }
.defs { position: absolute; }
svg { flex: none; display: block; overflow: visible; }
button { font: inherit; color: inherit; border: 0; padding: 0; }
.ln { fill: none; stroke: #d6d6d6; stroke-width: 1.3; }
.ln2 { fill: none; stroke: #d0d0d0; stroke-width: 2; }
.ln.dim { stroke: #5a5a5a; }
.ln.w { stroke: #fff; }
.ln.a { stroke: #aaa; stroke-width: 1.5; }
.flip { transform: scaleX(-1); }

.titlebar { height: 42px; flex: none; display: flex; align-items: center; padding-left: 21px; }
.quick { display: flex; gap: 18px; width: 105px; }
.doc { width: 309px; padding-top: 7px; letter-spacing: .1px; font-size: 14.2px; white-space: nowrap; color: #e0e0e0; }
.docarrow { width: 12px; }
.topsearch { margin-left: 371px; width: 500px; height: 30px; background: #1f1f1f; border-radius: 3px; display: flex; align-items: center; gap: 15px; padding: 1px 0 0 21px; font-size: 15.8px; color: #c8c8c8; }
.account { margin-left: 335px; display: flex; align-items: center; gap: 12px; width: 110px; color: #e0e0e0; font-size: 14.4px; }
.account span { width: 46px; white-space: nowrap; padding-top: 1px; }
.winbtns { display: flex; margin-left: 13px; gap: 41px; padding-top: 3px; }

.menu { height: 46px; flex: none; display: flex; justify-content: space-between; padding: 6px 7px 0 28px; align-items: flex-start; }
.tabs { display: grid; grid-template-columns: 68px 77px 73px 104px 65px 100px 64px 89px 100px; font-size: 16.6px; line-height: 30px; color: #d8d8d8; white-space: nowrap; }
.tabs .on b { color: #fff; font-weight: 700; letter-spacing: -.45px; display: inline-block; height: 32px; border-bottom: 2px solid #2aac94; }
.tabs .ctx { color: #2aac94; font-weight: 600; letter-spacing: -.1px; }
.share { width: 105px; height: 30px; background: #0c695a; border-radius: 4px; display: flex; align-items: center; gap: 10px; padding-left: 9px; color: #c4d3cf; font-size: 14.2px; }
.share svg:last-child { margin-left: -6px; }

.ribbon { height: 125px; flex: none; margin: 0 10px; background: #292929; border-radius: 10px; display: flex; position: relative; z-index: 2; box-shadow: 0 2px 5px rgba(0,0,0,.35); }
.grp { position: relative; display: flex; flex-direction: column; justify-content: space-between; padding: 10px 0 6px; border-right: 1px solid transparent; border-image: linear-gradient(transparent 5px, #424242 5px, #424242 120px, transparent 120px) 1; }
.cap { text-align: center; font-size: 12.4px; line-height: 21px; letter-spacing: -.1px; }
.btns { display: grid; justify-content: center; }
.g-clip { width: 201px; } .g-clip .btns { grid-template-columns: 34px 140px; justify-content: start; padding-left: 18px; column-gap: 13px; }
.g-data { width: 449px; } .g-data .btns { grid-template-columns: 60px 60px 78px 40px 60px 60px 78px; padding-right: 2px; }
.g-query { width: 145px; } .g-query .btns { grid-template-columns: 70px 56px; }
.g-insert { width: 183px; } .g-insert .btns { grid-template-columns: 50px 50px 62px; }
.g-calc { width: 233px; } .g-calc .btns { grid-template-columns: 96px 56px 66px; }
.g-sens { width: 93px; } .g-share { width: 73px; }
.g-cop { width: 164px; } .g-cop .btns { grid-template-columns: 96px 46px; padding-right: 5px; }
.rb { display: flex; flex-direction: column; align-items: center; gap: 4px; text-align: center; white-space: nowrap; letter-spacing: -.05px; }
.g-cop .rb { letter-spacing: .1px; }
.rb.off { color: #5c5c5c; }
.rb em { display: inline-block; width: 5px; height: 5px; border: solid currentColor; border-width: 0 1.4px 1.4px 0; transform: rotate(45deg); margin: 0 1px 3px 4px; }
.rb em.solo { margin: 0; }
.fx { font: italic 24px "Liberation Serif", serif; fill: #d8d8d8; stroke: none; }
.clip { display: flex; flex-direction: column; gap: 12.500px; }
.clip div { display: flex; align-items: center; gap: 5px; white-space: nowrap; letter-spacing: -.1px; }
.collapse { position: absolute; right: 10px; top: 102px; transform: scaleY(-1); stroke-width: 2; }

.work { flex: none; height: 777px; display: flex; }
.rail { width: 51px; border-right: 1px solid #3c3c3c; background: #141414; }
.rail div { height: 50px; display: flex; align-items: center; justify-content: center; border-left: 3px solid transparent; padding: 0 2px 3px 0; }
.rail .sel { border-color: #2aac94; }
.tiny { font: 700 9px "Open Sans", sans-serif; fill: #ddd; stroke: #141414; stroke-width: 2; paint-order: stroke; }
.center { width: 1417px; display: flex; flex-direction: column; }
.stage { height: 733px; display: flex; }
.banner { font: 700 47px "Liberation Sans", Arial, sans-serif; fill: #252423; stroke: #252423; stroke-width: 2.8; }
.num { font: 700 42px Roboto, sans-serif; fill: #fff; }
.lab { font: 700 25.500px "Open Sans", sans-serif; fill: #fff; }
.ctitle { font: 700 16.500px Roboto, sans-serif; fill: #fff; }
.atitle { font: 800 11.500px Roboto, sans-serif; fill: #fff; }
.ax { font: 12px "Open Sans", sans-serif; fill: #f4f4f4; letter-spacing: -.2px; }
.ax.semi { font-weight: 700; }
.ax.grey { fill: #605e5c; }
.see { font: 13.300px "Open Sans", sans-serif; fill: #2aac94; text-decoration: underline; }

.filters { width: 250px; background: #fff; color: #111; padding-left: 10px; }
.filters .ln { stroke: #222; }
.fhead { height: 57px; padding: 5px 13px 14px 7px; display: flex; align-items: center; gap: 11px; }
.fhead b { font-size: 17.500px; width: 130px; letter-spacing: -.3px; padding-top: 4px; }
.fhead .eye { margin: 0 4px 0 1px; }
.fhead .dc { stroke-width: 1.700; margin-left: 10px; }
.fsearch { width: 225px; height: 42px; border: 1px solid #a6a6a6; border-radius: 2px; display: flex; align-items: center; gap: 13px; padding: 1px 0 0 14px; font-size: 15.500px; color: #333; letter-spacing: -.2px; }
.fbody { border-top: 1px solid #b8b8b8; margin: 5px 0 0 -10px; padding-left: 10px; width: 250px; }
.ftitle { display: flex; justify-content: space-between; padding-right: 17px; }
.f1 { margin: 21px 0 11px; } .f2 { margin: 35px 0 10px; } .f3 { margin: 33px 0 11px; }
.fcard { width: 230px; height: 78px; border: 1px solid #c8c6c4; border-radius: 2px; padding: 11px 10px; color: #444; margin-bottom: 6px; }
.fdrop { width: 230px; height: 57px; border: 1px solid #333; border-radius: 2px; display: flex; align-items: center; justify-content: center; padding-top: 2px; }

.pagebar { height: 44px; background: #292929; display: flex; align-items: center; }
.view { width: 30px; height: 44px; margin-left: 12.500px; display: flex; flex-direction: column; justify-content: space-between; align-items: center; padding-top: 9px; }
.view .ln { stroke: #fff; }
.view.on::after { content: ""; width: 30px; height: 4px; border-radius: 2px; background: #2aac94; margin-bottom: 5px; }
.view.ph { margin-left: 25px; padding-top: 7px; }
.nv { margin-left: 19px; }
.nv.n2 { margin-left: 19px; margin-right: 7.500px; }
.page { width: 94px; height: 44px; border-left: 1px solid #777; border-bottom: 5px solid #2aac94; text-align: center; line-height: 45px; font-weight: 600; letter-spacing: -.1px; color: #fff; }
.add { width: 49px; height: 44px; background: #2aac94; display: flex; align-items: center; justify-content: center; padding-bottom: 3px; }

.viz { width: 227px; border-left: 1px solid #5c5c5c; border-right: 1px solid #5c5c5c; display: flex; flex-direction: column; }
.phead { display: flex; justify-content: space-between; align-items: center; padding: 13px 12px 0 10px; height: 37px; color: #fff; }
.phead b { font-size: 17.800px; font-weight: 600; letter-spacing: 0; }
.phead svg { stroke-width: 1.700; }
.build { padding: 11px 0 0 10px; font-weight: 600; font-size: 14.300px; letter-spacing: -.15px; color: #fff; height: 35px; }
.vtabs { display: flex; gap: 43px; padding-left: 10px; height: 40px; }
.vt { width: 40px; height: 40px; border-radius: 3px; display: flex; align-items: center; justify-content: center; }
.vt.on { background: #2b2b2b; }
.notch { margin-top: 5px; }
.vgrid { display: grid; grid-template-columns: repeat(6, 23px); grid-auto-rows: 23px; gap: 12px; padding: 12px 0 0 14px; height: 291px; margin: 0; }
.vgrid svg { width: 23px; height: 23px; }
.vgrid svg.pick { width: 30px; height: 30px; margin: -3.500px; outline: 1px solid #fff; }
.b { fill: #0a64b8; stroke: #6cb8f0; stroke-width: 1.300; }
.d { fill: #5c5c5c; stroke: #909090; stroke-width: 1.300; }
.g { fill: none; stroke: #aaa; stroke-width: 1.500; }
.w { fill: none; stroke: #d8d8d8; stroke-width: 1.500; }
.bl { fill: none; stroke: #5aa9e6; stroke-width: 1.500; }
.t123 { font: 10.500px "Open Sans", sans-serif; fill: #4aa3e8; text-anchor: middle; }
.t123.l { text-anchor: start; }
.big { font: 600 18px "Open Sans", sans-serif; fill: #3a96dd; }
.wells { position: relative; border-top: 1px solid #ddd; flex: 1; padding-left: 5px; overflow: hidden; }
.wells h4 { font-weight: 400; font-size: 14.200px; margin: 0; padding-left: 10px; line-height: 20px; padding-top: 14px; height: 41px; }
.wells .h1st { padding-top: 11px; height: 38px; }
.well { width: 213px; height: 34px; border: 1px dashed #666; border-radius: 3px; line-height: 31px; padding-left: 13px; font-size: 14.200px; }
.well.full { height: 41px; padding: 3px 2px; margin-bottom: 3px; }
.pill { width: 206px; height: 28px; border: 1px solid #777; border-radius: 2px; display: flex; align-items: center; padding: 0 6px 0 5px; background: #1c1c1c; }
.pill span { flex: 1; }
.pill svg:last-child { margin-left: 9px; }
.vbar { position: absolute; right: 0; top: 3px; width: 7px; height: 195px; border-radius: 4px; background: #a8a8a8; }

.data { width: 225px; }
.dsearch { margin: 20px 5px 0; height: 30px; border: 1px solid #6e6e6e; border-radius: 4px; background: #1f1f1f; display: flex; align-items: center; gap: 9px; padding: 1px 0 0 14px; color: #a0a0a0; font-size: 15.500px; }
.dsearch .ln { stroke: #aaa; }
.list { position: relative; margin-top: 11px; height: 670px; overflow: hidden; font-size: 14.200px; }
.list > div { height: 30px; display: flex; align-items: center; white-space: nowrap; }
.t { padding-left: 16px; }
.t .ic { margin-right: 6px; }
.t .ic.c { margin-right: 6px; margin-left: 2px; }
.ic { width: 16px; height: 16px; fill: none; stroke: #e4e4e4; stroke-width: 1.300; }
.ic.c { width: 12px; height: 12px; }
.ic.r { transform: rotate(-90deg); margin: 0 2px; }
.ticon { position: relative; }
.ok { position: absolute; left: 8px; top: 6px; }
.f { padding-left: 34px; }
.f i { width: 16px; flex: none; }
.f u { width: 15px; height: 15px; border: 1px solid #aaa; border-radius: 2px; margin: 0 10px 0 5px; flex: none; }
.f u.ck { background: #2aac94; }
.f u + i, .f u + .ic { margin-right: 6px; }
.dbar { position: absolute; right: 5px; top: -1px; width: 10px; height: 575px; background: #8a8886; }

.status { height: 30px; flex: none; border-top: 1px solid #666; border-bottom: 1px solid #000; display: flex; align-items: center; padding: 2px 23px 0 5px; color: #d8d8d8; }
.pg { font-size: 14.600px; width: 1650px; letter-spacing: 0; }
.pct { width: 54px; margin-left: 19px; font-size: 14px; }

.task { height: 60px; flex: none; background: #202020; border-top: 1px solid #454545; display: flex; align-items: center; color: #fff; }
.weather { width: 490px; display: flex; gap: 3px; padding-left: 25px; }
.weather div { display: flex; flex-direction: column; white-space: nowrap; letter-spacing: .1px; }
.weather .sub { color: #b8b8b8; }
.badge { font: 13.500px "Open Sans", sans-serif; text-anchor: middle; fill: #111; }
.badge.lt { fill: #d8dcff; font-size: 12px; }
.cell { position: relative; width: 55px; height: 50px; display: flex; align-items: center; justify-content: center; flex: none; }
.cell.first { margin-left: 3.500px; }
.cell i { position: absolute; bottom: 0; left: 24px; width: 8px; height: 4px; border-radius: 2px; background: #9a9a9a; }
.cell .wide { margin-left: 8px; margin-bottom: 6px; }
.cell.cur { background: #303030; border-radius: 5px; width: 49px; margin: 0 3px; border: 1px solid #3a3a3a; }
.cell.cur i { width: 20px; left: 14px; background: #4cc2ff; }
.tsearch { width: 275px; height: 40px; margin: 0 0 1px 3px; border-radius: 20px; background: #3b3b3b; border: 1px solid #4c4c4c; display: flex; align-items: center; padding: 0 19px 0 14px; font-size: 15.700px; color: #d8d8d8; gap: 11px; }
.tsearch span { flex: 1; }
.tray { margin-left: auto; display: flex; align-items: center; width: 374px; padding: 0 14px 2px 0; justify-content: flex-start; }
.tray .up { transform: scaleY(-1); margin-left: 10px; stroke-width: 1.700; }
.cloud { margin: 0 10px 0 22px; }
.lang { width: 54px; text-align: center; font-size: 14px; }
.wifi { margin-left: 10px; }
.tr { margin-right: 9px; }
.clock { width: 91px; text-align: right; font-size: 14.600px; letter-spacing: 0; margin-right: 11px; white-space: nowrap; }

.dialog { position: absolute; z-index: 5; left: 536px; top: 395px; width: 826px; height: 230px; background: #292929; border: 1px solid #383838; border-radius: 10px; padding: 28px 37px 0 34px; box-shadow: 0 26px 60px rgba(0,0,0,.28), 0 4px 14px rgba(0,0,0,.2); color: #fff; }
.dialog h2 { margin: 0; font-size: 23.650px; font-weight: 600; line-height: 30px; letter-spacing: 0; }
.dialog p { margin: 24px 0 0; font-size: 15.730px; line-height: 25px; white-space: nowrap; }
.dx { position: absolute; right: 11px; top: 8px; stroke: #777; }
.close { display: block; margin: 31px 0 0 auto; width: 83px; height: 33px; background: #0c695a; border: 2px solid #fff; border-radius: 4px; box-shadow: inset 0 0 0 2px #0c695a, inset 0 0 0 3px #1b2e2a; font-weight: 600; font-size: 15px; padding-bottom: 1px; }
```
